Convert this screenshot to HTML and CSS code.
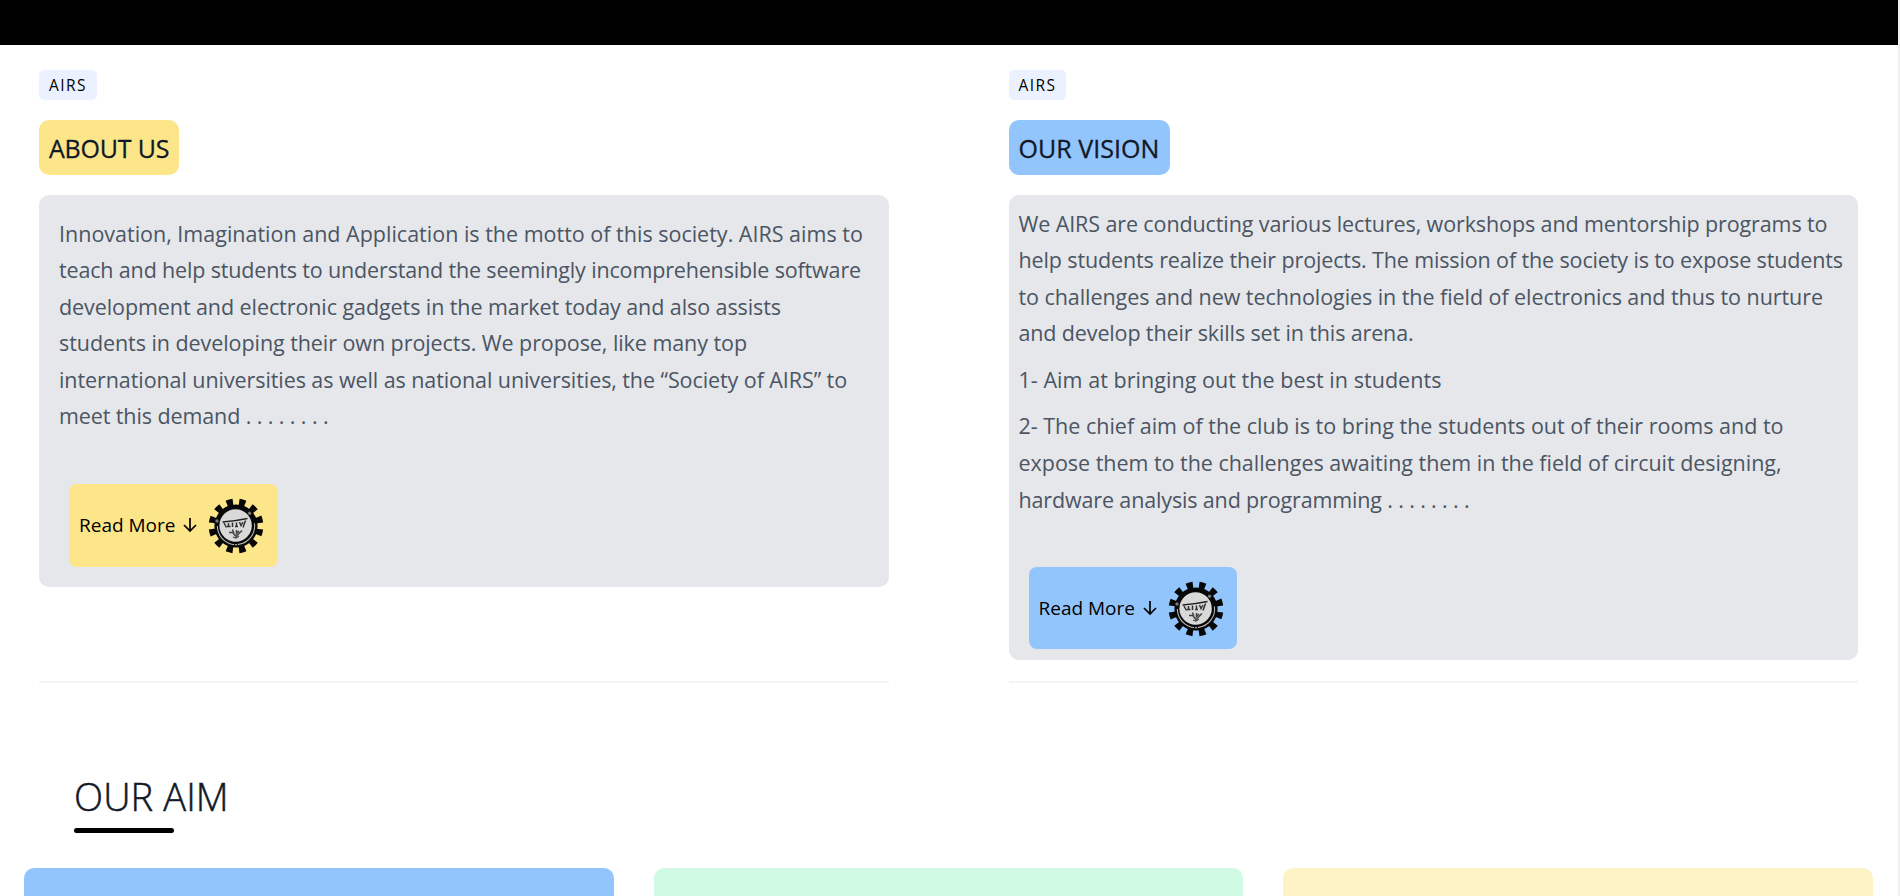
FILE: index.html
```html
<!DOCTYPE html>
<html lang="en">
<head>
<meta charset="utf-8">
<title>AIRS</title>
<link rel="stylesheet" href="styles.css">
</head>
<body>
<svg class="defs" aria-hidden="true">
  <symbol id="gear" viewBox="0 0 62 62">
    <circle cx="31" cy="32" r="24" fill="none" stroke="#080808" stroke-width="6.8" pathLength="24" stroke-dasharray="1 1" transform="rotate(7.5 31 32)"/>
    <circle cx="31" cy="32" r="21.6" fill="#080808"/>
    <circle cx="31" cy="32" r="18.6" fill="none" stroke="#b5b5b5" stroke-width="1.1" pathLength="360" stroke-dasharray="188 172" transform="rotate(-8 31 32)"/>
    <circle cx="31" cy="32" r="18.6" fill="none" stroke="#080808" stroke-width="1.4" pathLength="360" stroke-dasharray="3 6 3 348" transform="rotate(84 31 32)"/>
    <circle cx="44.6" cy="19.2" r="1.7" fill="#777"/>
    <circle cx="12" cy="27" r="1.7" fill="#777"/>
    <circle cx="30.6" cy="31.5" r="16.2" fill="#d9d9d9"/>
    <path d="M17.5 28C25 27.500 33 26.500 42.500 24.500" fill="none" stroke="#222" stroke-width="1.500"/>
    <path d="M19 29L21.500 33.500M22 32.500H25.500M23.500 29V33M27.500 28.500V33M30 32.500H33M31.500 28.500V32.500M34.500 28L36 31.500L38 28M40.500 26.500L38 33.500" fill="none" stroke="#333" stroke-width="1.500"/>
    <path d="M24 38.500H28.500L27.500 35.500M28 39L31 42.500L37 36.500M31.500 36V39.500L34 37" fill="none" stroke="#444" stroke-width="1.500"/>
    <path d="M28 43L31 44L34 42" fill="none" stroke="#444" stroke-width="1.200"/>
  </symbol>
  <symbol id="arrow" viewBox="0 0 20 20">
    <path d="M10 3V15.500M4 10L10 16L16 10" fill="none" stroke="currentColor" stroke-width="1.700"/>
  </symbol>
</svg>

<header class="topbar"></header>

<main class="page">
  <section class="columns">
    <article class="column">
      <span class="badge">AIRS</span>
      <h2 class="title title-yellow about">ABOUT US</h2>
      <div class="card card-about">
        <p class="text">
          <span class="line a1">Innovation, Imagination and Application is the motto of this society. AIRS aims to</span>
          <span class="line a2">teach and help students to understand the seemingly incomprehensible software</span>
          <span class="line a3">development and electronic gadgets in the market today and also assists</span>
          <span class="line a4">students in developing their own projects. We propose, like many top</span>
          <span class="line a5">international universities as well as national universities, the “Society of AIRS” to</span>
          <span class="line a6">meet this demand . . . . . . . .</span>
        </p>
        <a class="more more-yellow"><span class="more-label">Read More</span><svg class="arrow"><use href="#arrow"/></svg><svg class="gear"><use href="#gear"/></svg></a>
      </div>
    </article>
    <article class="column">
      <span class="badge badge-narrow">AIRS</span>
      <h2 class="title title-blue vision">OUR VISION</h2>
      <div class="card card-vision">
        <p class="text">
          <span class="line v1">We AIRS are conducting various lectures, workshops and mentorship programs to</span>
          <span class="line v2">help students realize their projects. The mission of the society is to expose students</span>
          <span class="line v3">to challenges and new technologies in the field of electronics and thus to nurture</span>
          <span class="line v4">and develop their skills set in this arena.</span>
        </p>
        <p class="text">
          <span class="line v5">1- Aim at bringing out the best in students</span>
        </p>
        <p class="text">
          <span class="line v6">2- The chief aim of the club is to bring the students out of their rooms and to</span>
          <span class="line v7">expose them to the challenges awaiting them in the field of circuit designing,</span>
          <span class="line v8">hardware analysis and programming . . . . . . . .</span>
        </p>
        <a class="more more-blue"><span class="more-label">Read More</span><svg class="arrow"><use href="#arrow"/></svg><svg class="gear"><use href="#gear"/></svg></a>
      </div>
    </article>
  </section>

  <section class="aim">
    <h1 class="aim-title">OUR AIM</h1>
    <div class="aim-rule"></div>
    <div class="aim-cards">
      <div class="aim-card aim-blue"></div>
      <div class="aim-card aim-green"></div>
      <div class="aim-card aim-yellow"></div>
    </div>
  </section>
</main>
</body>
</html>
```
FILE: styles.css
```css
* { box-sizing: border-box; margin: 0; padding: 0; }

html { height: 100%; overflow: hidden; background: #f0f0f0; }

body {
  width: 1898px;
  height: 896px;
  overflow: hidden;
  background: #fff;
  color: #000;
  font-family: "Open Sans", "Noto Sans", sans-serif;
}

.defs { display: none; }

.topbar { height: 45px; background: #000; }

.columns {
  display: grid;
  grid-template-columns: 1fr 1fr;
  gap: 120px;
  height: 638px;
  padding: 25px 40px 0 39px;
}

.column {
  display: flex;
  flex-direction: column;
  align-items: flex-start;
  border-bottom: 2px solid #f3f4f6;
}

.badge {
  width: 58px;
  height: 30px;
  padding-left: 10px;
  border-radius: 5px;
  background: #ebf1ff;
  font-size: 15.5px;
  line-height: 30px;
  letter-spacing: 1.4px;
}

.badge-narrow { width: 57px; }

.title {
  height: 55px;
  margin: 20px 0;
  padding-left: 10px;
  border-radius: 10px;
  color: #111827;
  font-size: 25px;
  font-weight: 400;
  line-height: 57px;
  -webkit-text-stroke: 0.3px #111827;
  white-space: nowrap;
}

.title-yellow { background: #fde68a; }
.title-blue { background: #93c5fd; }
.about { width: 140px; letter-spacing: -0.2px; }
.vision { width: 161px; letter-spacing: 0.05px; }

.card {
  width: 100%;
  border-radius: 10px;
  background: #e5e7eb;
}

.card-about { height: 392px; padding: 20.6px 20px; }
.card-vision { height: 465px; padding: 10.6px 10px; }

.text {
  margin-bottom: 10px;
  color: #4b5563;
  font-size: 21.5px;
  line-height: 36.56px;
}

.line { display: block; white-space: nowrap; }

.a2 { letter-spacing: -0.156px; }
.a3 { letter-spacing: -0.08px; }
.a4 { letter-spacing: -0.065px; }
.a5 { letter-spacing: -0.08px; }
.a6 { letter-spacing: -0.1px; }
.v1 { letter-spacing: -0.107px; }
.v2 { letter-spacing: -0.128px; }
.v3 { letter-spacing: -0.062px; }
.v4 { letter-spacing: -0.137px; }
.v5 { letter-spacing: 0.05px; }
.v6 { letter-spacing: -0.007px; }
.v7 { letter-spacing: -0.027px; }
.v8 { letter-spacing: -0.144px; }

.more {
  display: flex;
  align-items: center;
  width: 209px;
  height: 83px;
  margin: 49px 0 0 10px;
  padding: 0 10px;
  border-radius: 8px;
}

.more-yellow { background: #fde68a; }
.more-blue { width: 208px; height: 82px; background: #93c5fd; }

.more-label {
  width: 101px;
  font-size: 19px;
  line-height: 30px;
  white-space: nowrap;
}

.arrow { width: 20px; height: 20px; }
.gear { width: 62px; height: 62px; margin-left: 5px; }

.aim { padding: 83px 25px 0 24px; }

.aim-title {
  padding-left: 50px;
  color: #111827;
  font-size: 38px;
  font-weight: 300;
  line-height: 60px;
  letter-spacing: 0.1px;
  -webkit-text-stroke: 0.5px #111827;
}

.aim-rule {
  width: 100px;
  height: 5px;
  margin: 2px 0 35px 50px;
  border-radius: 3px;
  background: #000;
}

.aim-cards {
  display: grid;
  grid-template-columns: repeat(3, 1fr);
  gap: 40px;
}

.aim-card { height: 28px; border-radius: 10px 10px 0 0; }
.aim-blue { background: #93c5fd; }
.aim-green { background: #d1fae5; }
.aim-yellow { background: #fef3c7; }
```
